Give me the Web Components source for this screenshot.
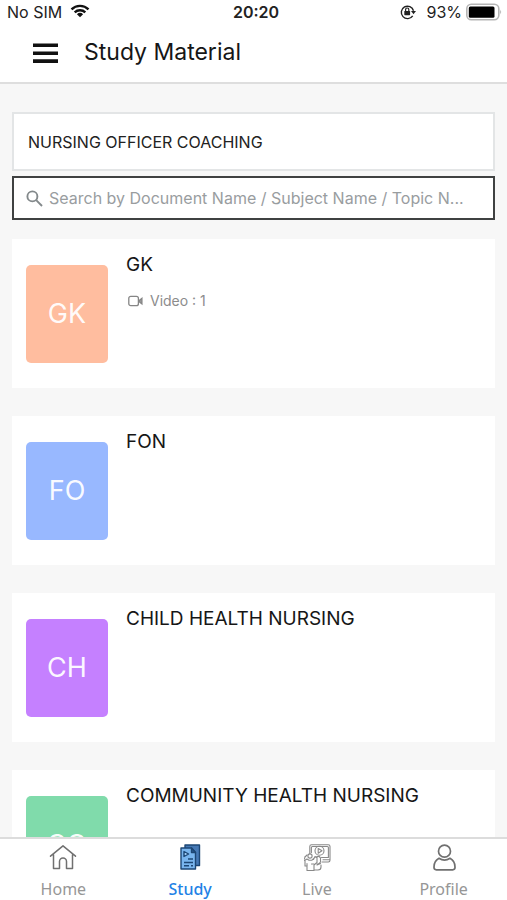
<!DOCTYPE html>
<html lang="en">
<head>
<meta charset="utf-8">
<meta name="viewport" content="width=device-width, initial-scale=1">
<title>Study Material</title>
<style>
  html, body { margin: 0; height: 100%; }
  body { font-family: Inter, "Liberation Sans", sans-serif; color: #161616; background: #f7f7f7; }
</style>
</head>
<body>
<study-app></study-app>

<script>
const define = (name, html, setup) => customElements.define(name, class extends HTMLElement {
  constructor() {
    super();
    const template = document.createElement('template');
    template.innerHTML = html;
    this.attachShadow({ mode: 'open' }).append(template.content.cloneNode(true));
  }
  connectedCallback() { if (setup) setup(this, this.shadowRoot); }
});

define('status-bar', `
  <style>
    :host { display: grid; grid-template-columns: 1fr auto 1fr; align-items: center; height: 24px; padding: 0 5px 0 7px; font-size: 16px; line-height: 24px; color: #222; }
    .side { display: flex; align-items: center; gap: 8px; }
    .end { justify-content: flex-end; gap: 4px; }
    .lock { margin-right: 6px; }
    time { font-weight: 600; padding-left: 3px; }
    svg { display: block; }
  </style>
  <div class="side"><span>No SIM</span>
    <svg width="20" height="16" viewBox="0 0 20 16" fill="none" stroke="#111" stroke-width="2.4"><path d="M1.5 5.300a12.200 12.200 0 0 1 17 0M4.700 8.400a7.600 7.600 0 0 1 10.600 0"/><path d="M10 13.200 6.900 10.300a4.500 4.500 0 0 1 6.200 0z" fill="#111" stroke="none"/></svg>
  </div>
  <time>20:20</time>
  <div class="side end">
    <svg class="lock" width="16" height="16" viewBox="0 0 16 16" fill="none" stroke="#222" stroke-width="1.4"><path d="M12.700 11.800A6.200 6.200 0 1 1 13.500 6.800"/><path d="M11 7h5l-2.500 3.200z" fill="#222" stroke="none"/><rect x="4.300" y="7" width="5.800" height="4.200" rx=".6" fill="#222" stroke="none"/><path d="M5.600 7.200V5.600a1.600 1.600 0 0 1 3.200 0v1.600" stroke-width="1.200"/></svg>
    <span>93%</span>
    <svg width="36" height="18" viewBox="0 0 36 18"><rect x=".8" y="1.300" width="32" height="15.400" rx="4.500" fill="#fff" stroke="#b5b5b5" stroke-width="1.600"/><rect x="2.800" y="3.400" width="25.700" height="11.300" rx="1.500" fill="#000"/><path d="M34.400 6.800q1.600 2.200 0 4.400z" fill="#999"/></svg>
  </div>`);

define('app-header', `
  <style>
    :host { display: flex; align-items: center; gap: 25px; height: 60px; padding: 0 32px; box-sizing: border-box; border-bottom: 2px solid #dedede; }
    button { border: 0; background: none; padding: 0; display: block; }
    svg { display: block; }
    h1 { margin: 0; font-weight: 400; font-size: 23px; line-height: 32px; padding-bottom: 2px; }
  </style>
  <button type="button" aria-label="Open menu"><svg width="27" height="21" viewBox="0 0 27 21" fill="#111"><path d="M1 .5h25v3.600H1zM1 8.400h25V12H1zM1 16.300h25v3.600H1z"/></svg></button>
  <h1><slot></slot></h1>`);

define('course-picker', `
  <style>
    :host { display: block; }
    button { display: block; width: 100%; height: 59px; box-sizing: border-box; padding: 0 14px; background: #fff; border: 2px solid #e3e5e6; text-align: left; font: inherit; font-size: 16px; color: #222; }
  </style>
  <button type="button"><slot></slot></button>`);

define('search-field', `
  <style>
    :host { display: flex; align-items: center; gap: 6px; height: 44px; box-sizing: border-box; padding: 0 12px; background: #fff; border: 2px solid #3f4141; }
    svg { flex: none; display: block; }
    input { flex: 1; min-width: 0; border: 0; outline: 0; padding: 0; background: none; font: inherit; font-size: 16px; line-height: 24px; text-overflow: ellipsis; color: #222; }
    input::placeholder { color: #999d9f; opacity: 1; }
  </style>
  <svg width="17" height="17" viewBox="0 0 17 17" fill="none" stroke="#83898b" stroke-width="1.900"><circle cx="6.400" cy="6.400" r="5"/><path d="m10.200 10.200 5.800 5.800"/></svg>
  <input type="text" aria-label="Search" placeholder="Search by Document Name / Subject Name / Topic N...">`);

define('subject-card', `
  <style>
    :host { display: flex; align-items: flex-start; gap: 18px; background: #fff; padding: 26px 14px 25px; }
    .tile { flex: none; display: grid; place-items: center; width: 82px; height: 98px; border-radius: 5px; background: var(--tile); color: #fffffff0; font-size: 27px; line-height: 32px; }
    .body { display: grid; gap: 12px; margin-top: -12px; }
    h2 { margin: 0; font-size: 19px; line-height: 24px; font-weight: 400; }
  </style>
  <div class="tile"></div>
  <div class="body"><h2></h2><slot></slot></div>`,
  (host, root) => {
    root.querySelector('.tile').textContent = host.getAttribute('initials');
    root.querySelector('h2').textContent = host.getAttribute('name');
  });

define('video-count', `
  <style>
    :host { display: flex; align-items: center; gap: 7px; padding-left: 2px; font-size: 14px; line-height: 24px; color: #8c8c8c; }
    svg { display: block; }
  </style>
  <svg width="15" height="12" viewBox="0 0 15 12" fill="none" stroke="#858585" stroke-width="1.300"><rect x=".8" y="1.300" width="9.600" height="9.400" rx="2"/><path d="m11.200 5.500 2.700-2.200v5.600l-2.700-2.200z" fill="#999"/></svg>
  <span><slot></slot></span>`);

define('nav-tab', `
  <style>
    :host { display: block; flex: 1; font-family: "Noto Sans", sans-serif; color: #969696; }
    :host([active]) { color: #1f82e6; }
    a { display: flex; flex-direction: column; align-items: center; gap: 6px; padding-top: 4px; color: inherit; text-decoration: none; font-size: 16px; line-height: 20px; }
    :host([active]) a { font-weight: 500; }
    ::slotted(svg) { display: block; }
  </style>
  <a href="#"><slot name="icon"></slot><span><slot></slot></span></a>`);

define('tab-bar', `
  <style>
    :host { display: flex; height: 63px; flex: none; box-sizing: border-box; background: #fff; border-top: 2px solid #dcdcdc; }
  </style>
  <slot></slot>`);

define('study-app', `
  <style>
    :host { display: flex; flex-direction: column; height: 100vh; }
    header { background: #fff; flex: none; }
    main { flex: 1; min-height: 0; overflow-y: auto; scrollbar-width: none; padding: 28px 12px; box-sizing: border-box; }
    .filters { display: grid; gap: 5px; margin-bottom: 19px; }
    .list { display: grid; gap: 28px; }
  </style>
  <header><status-bar></status-bar><app-header>Study Material</app-header></header>
  <main>
    <div class="filters">
      <course-picker>NURSING OFFICER COACHING</course-picker>
      <search-field></search-field>
    </div>
    <div class="list">
      <subject-card initials="GK" name="GK" style="--tile:#ffbd9f"><video-count>Video : 1</video-count></subject-card>
      <subject-card initials="FO" name="FON" style="--tile:#98b8ff"></subject-card>
      <subject-card initials="CH" name="CHILD HEALTH NURSING" style="--tile:#c580ff"></subject-card>
      <subject-card initials="CO" name="COMMUNITY HEALTH NURSING" style="--tile:#80dbab"></subject-card>
    </div>
  </main>
  <tab-bar>
    <nav-tab><svg slot="icon" width="28" height="30" viewBox="0 0 28 30" fill="none" stroke="#707070" stroke-width="1.500" stroke-linejoin="round" stroke-linecap="round"><path d="M1.500 13.200 14 2.800l12.500 10.400M4.500 11.400V25.500h6V18.500a3.500 3.500 0 0 1 7 0v7h6V11.400"/></svg>Home</nav-tab>
    <nav-tab active><svg slot="icon" width="28" height="30" viewBox="0 0 28 30" stroke="#1d4775" stroke-width="1.400" stroke-linejoin="round"><path d="M9 2h14.500v20.500H9z" fill="#4679b5"/><path d="M5 5h10.500l4 4.500v16.500H5z" fill="#79b5ee"/><path d="M15.500 5v4.500h4z" fill="#285b95"/><path d="M8 8.500v5l4.600-2.500z" fill="#a8d4fb"/><path d="M12 16h5M8 19.500h9M8 22.700h5M15 22.700h2" fill="none"/></svg>Study</nav-tab>
    <nav-tab><svg slot="icon" width="28" height="30" viewBox="0 0 28 30" fill="none" stroke="#898989" stroke-width="1.100" stroke-linejoin="round" stroke-linecap="round"><path d="M6.800 10.500V3.500Q6.800 1.800 8.500 1.800h16.800q1.700 0 1.700 1.700v13.800q0 1.700-1.700 1.700H19M8.400 9.500V4.500q0-1 1-1h15q1 0 1 1V14.500H18.500M20 16.700h6.500"/><circle cx="16.500" cy="7.800" r="4.500"/><path d="m15.200 5.500 3.800 2.300-3.800 2.400z"/><circle cx="7" cy="13" r="2.100"/><path d="M1.500 17.500 4 16l2 1.200h3L11 15M2 18v5h2v4.500h7V22l3-2.500V14.500l-2-1-1.500 3M2 14l2-2M1.500 16l.5-2.500"/><path d="M13 14.500q3-2.500 4.500.5v4q-1.500 2.500-3.500 2M11.500 27h3.500q3 0 3-3v-2M14 22l3.500-1.500M4 20.500v2M8.500 21H11"/></svg>Live</nav-tab>
    <nav-tab><svg slot="icon" width="28" height="30" viewBox="0 0 28 30" fill="none" stroke="#707070" stroke-width="1.700" stroke-linejoin="round"><circle cx="14.500" cy="8.200" r="6"/><path d="M9 15.300q5.500 3.800 11 0 5 2.600 5 8.700v.6q0 2.200-2.300 2.200H6.300Q4 26.800 4 24.600V24q0-6.100 5-8.700z"/></svg>Profile</nav-tab>
  </tab-bar>`);
</script>
</body>
</html>
